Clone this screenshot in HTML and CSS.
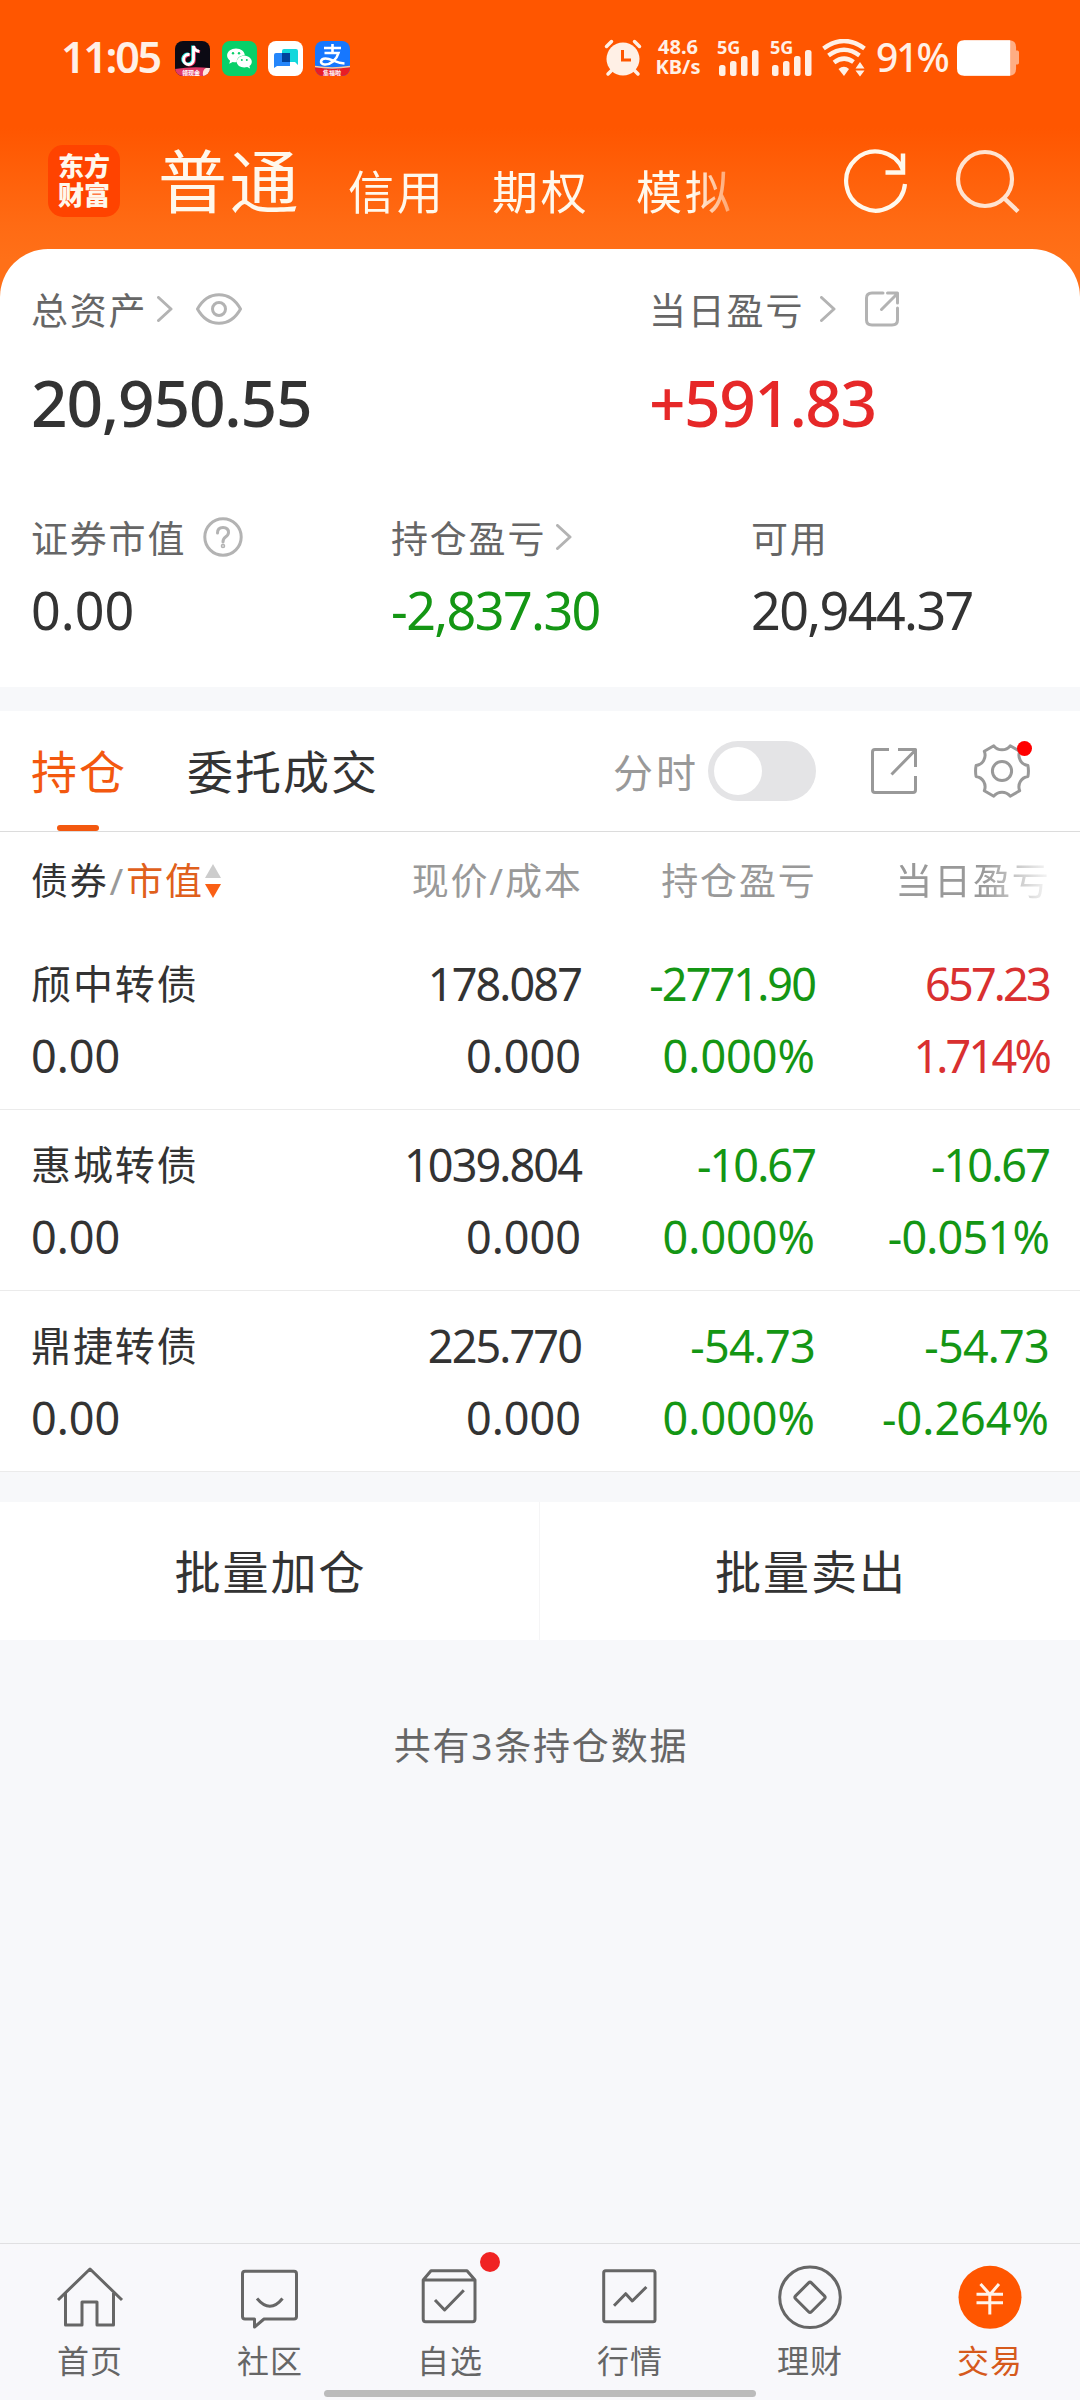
FILE: index.html
```html
<!DOCTYPE html>
<html lang="zh-CN">
<head>
<meta charset="utf-8">
<title>交易</title>
<link rel="stylesheet" href="styles.css">
</head>
<body>
<div class="page">
  <header class="top">
    <div class="status">
      <div class="status-left">
        <span class="clock">11:05</span>
        <svg class="app" viewBox="0 0 35 35"><clipPath id="r"><rect width="35" height="35" rx="8"/></clipPath><g clip-path="url(#r)"><rect width="35" height="35" fill="#0c0a14"/><path d="M18.500 5v13.500a5 5 0 1 1-4-4.900M18.500 5c.4 3 2.500 5 5.800 5.300" transform="translate(-.8 -.5)" fill="none" stroke="#25e4e0" stroke-width="3"/><path d="M18.500 5v13.500a5 5 0 1 1-4-4.900M18.500 5c.4 3 2.500 5 5.800 5.300" transform="translate(.8 .5)" fill="none" stroke="#f5315c" stroke-width="3"/><path d="M18.500 5v13.500a5 5 0 1 1-4-4.900M18.500 5c.4 3 2.500 5 5.800 5.300" fill="none" stroke="#fff" stroke-width="2.800"/><path d="M0 28q17-3 35-1v8H0z" fill="#e23a68"/><path d="M28 35q-1-6 3-8h4v5l-4 3z" fill="#ffe9dc"/></g><text x="7" y="33.500" class="ribbon">领现金</text></svg>
        <svg class="app" viewBox="0 0 35 35"><rect width="35" height="35" rx="8" fill="#08d069"/><path d="M14 7.500c5 0 8.800 3 8.800 7.100-4.800-.1-8.300 2.600-8 6.700-1.600.1-3 0-4.100-.4l-3.500 1.900.9-3c-2-1.400-3-3.200-3-5.200 0-4.100 4-7.100 8.900-7.100z" fill="#fff"/><path d="M22.300 14.800c4.200 0 7.500 2.700 7.500 6 0 1.800-.9 3.200-2.400 4.300l.7 2.500-2.900-1.500c-5.200 1.400-10.400-1-10.400-5.300 0-3.300 3.300-6 7.500-6z" fill="#fff"/><g fill="#08d069"><circle cx="11" cy="12.300" r="1.200"/><circle cx="17" cy="12.300" r="1.200"/><circle cx="19.800" cy="19" r="1"/><circle cx="24.800" cy="19" r="1"/></g></svg>
        <svg class="app" viewBox="0 0 35 35"><rect width="35" height="35" rx="8" fill="#fff"/><path d="M8 12h14v13H9l-3 2V14q0-2 2-2z" fill="#2486fb"/><path d="M16 8h12q2 0 2 2v14l-3-3H14V10q0-2 2-2z" fill="#12d7dc"/><path d="M14 12h8v9h-8z" fill="#00439c"/></svg>
        <svg class="app" viewBox="0 0 35 35"><clipPath id="s"><rect width="35" height="35" rx="8"/></clipPath><g clip-path="url(#s)"><rect width="35" height="35" fill="#1677ff"/><path d="M9 7h17M17.500 3v9M9.500 12h14c-2 7-8 12-14 11.500-5-.5-4.500-6 1-6 6 0 10 4.500 19 5" fill="none" stroke="#fff" stroke-width="2.600"/><path d="M0 26q17 3 35 0v9H0z" fill="#e91d25"/><path d="M0 25.500q17 3 35 0" fill="none" stroke="#ffc79a" stroke-width="1.500"/></g><text x="8" y="33.500" class="ribbon">集福啦</text></svg>
      </div>
      <div class="status-right">
        <svg class="alarm" viewBox="0 0 38 38"><g stroke="#fff0e6" stroke-width="3.500" stroke-linecap="round" fill="none"><path d="M2.500 7.500l5-5M30.500 2.500l5 5M8 31l-4 4M30 31l4 4"/></g><circle cx="19" cy="20" r="16.500" fill="#fff0e6"/><path d="M18.500 11v10h8.500" stroke="#ff5600" stroke-width="3" fill="none"/></svg>
        <div class="speed"><span>48.6</span><span>KB/s</span></div>
        <svg class="cell" viewBox="0 0 44 38"><text x="0" y="14.500" class="gen">5G</text><g fill="#fff0e6"><rect x="2" y="26" width="6.500" height="11" rx="2.500"/><rect x="13" y="22" width="6.500" height="15" rx="2.500"/><rect x="24" y="17" width="6.500" height="20" rx="2.500"/><rect x="35" y="11" width="6.500" height="26" rx="2.500"/></g></svg>
        <svg class="cell second" viewBox="0 0 44 38"><text x="0" y="14.500" class="gen">5G</text><g fill="#fff0e6"><rect x="2" y="26" width="6.500" height="11" rx="2.500"/><rect x="13" y="22" width="6.500" height="15" rx="2.500"/><rect x="24" y="17" width="6.500" height="20" rx="2.500"/><rect x="35" y="11" width="6.500" height="26" rx="2.500"/></g></svg>
        <svg class="wifi" viewBox="0 0 44 38"><g fill="none" stroke="#fff0e6" stroke-width="4.500"><path d="M1.500 9.500Q22-5.500 42.500 9.500"/><path d="M6.500 16.500Q22 5 37.500 16.500"/><path d="M12 23.500Q22 16 31.500 23"/></g><path d="M16.500 30Q22 25.500 27 30L22 37z" fill="#fff0e6"/><path d="M33.500 29.500l4.500-6.500 4.500 6.500zM33.500 31.500h9L38 37.500z" fill="#fff0e6"/></svg>
        <span class="percent">91%</span>
        <svg class="battery" viewBox="0 0 64 38"><path d="M7 1h46q7 0 7 7v3.500h1.500q1.500 0 1.500 2v10q0 2-1.500 2H60V30q0 7-7 7H7z" fill="#ffad83"/><path d="M7 1h47v36H7q-7 0-7-7V8q0-7 7-7z" fill="#fff"/></svg>
      </div>
    </div>
    <div class="titlebar">
      <div class="logo"><span>东方</span><span>财富</span></div>
      <nav class="accounts"><span class="current">普通</span><span>信用</span><span>期权</span><span>模拟</span></nav>
      <svg class="tool" viewBox="0 0 70 70"><path d="M65 37A29.500 29.500 0 1 1 63 23" fill="none" stroke="#fff8ec" stroke-width="4.200"/><path d="M45.500 25.500H63V6.500" fill="none" stroke="#fff8ec" stroke-width="4.500"/></svg>
      <svg class="tool search" viewBox="0 0 70 70"><circle cx="32" cy="32" r="27" fill="none" stroke="#ffe3d0" stroke-width="4.200"/><path d="M51 51l14 13.500" stroke="#ffe3d0" stroke-width="4.500"/></svg>
    </div>
  </header>

  <section class="summary">
    <div class="totals">
      <div class="stat">
        <div class="label">总资产<svg class="chev" viewBox="0 0 16 26"><path d="M1.500 1.500L14 13 1.500 24.500"/></svg><svg class="eye" viewBox="0 0 46 32"><path d="M1.500 16C12-3 34-3 44.500 16 34 35 12 35 1.500 16z"/><circle cx="23" cy="16" r="6.500"/></svg></div>
        <div class="big">20,950.55</div>
      </div>
      <div class="stat">
        <div class="label">当日盈亏<svg class="chev gap" viewBox="0 0 16 26"><path d="M1.500 1.500L14 13 1.500 24.500"/></svg><svg class="share-s" viewBox="0 0 34 36"><path d="M18 2H7Q1.500 2 1.500 7V29Q1.500 34 7 34H27Q32.500 34 32.500 29V17M16.500 18.500L32 3M22.500 2H32.500V12"/></svg></div>
        <div class="big up">+591.83</div>
      </div>
    </div>
    <div class="details">
      <div class="stat">
        <div class="label">证券市值<svg class="help" viewBox="0 0 40 40"><circle cx="20" cy="20" r="18.200"/><path d="M14.500 16Q14.500 10.500 20 10.500T25.500 15.500Q25.500 18 22.500 20 20 21.800 20 25"/><circle cx="20" cy="29" r=".8"/></svg></div>
        <div class="mid">0.00</div>
      </div>
      <div class="stat">
        <div class="label">持仓盈亏<svg class="chev near" viewBox="0 0 16 26"><path d="M1.500 1.500L14 13 1.500 24.500"/></svg></div>
        <div class="mid down tight">-2,837.30</div>
      </div>
      <div class="stat">
        <div class="label">可用</div>
        <div class="mid tight">20,944.37</div>
      </div>
    </div>
  </section>

  <section class="holdings">
    <div class="tabs">
      <span class="tab active">持仓</span>
      <span class="tab">委托成交</span>
      <span class="minute">分时</span>
      <span class="switch"></span>
      <svg class="share" viewBox="0 0 48 48"><path d="M19 2.500H5Q2.500 2.500 2.500 5V43Q2.500 45.500 5 45.500H43Q45.500 45.500 45.500 43V29M21.500 27.500L44.500 4M28 2.500H45.500V20"/></svg>
      <div class="gear"><svg viewBox="0 0 60 60"><path d="M55.900 35.500A10.400 10.400 0 0 0 47.700 49.700L38.200 55.200A10.400 10.400 0 0 0 21.800 55.200L12.300 49.700A10.400 10.400 0 0 0 4.100 35.500Q3 30 4.100 24.500A10.400 10.400 0 0 0 12.300 10.300L21.800 4.800A10.400 10.400 0 0 0 38.200 4.800L47.700 10.300A10.400 10.400 0 0 0 55.900 24.500Q57 30 55.900 35.500z"/><circle cx="30" cy="30" r="9.600"/></svg><i class="dot"></i></div>
    </div>
    <div class="row head">
      <span class="first">债券<em>/</em><b>市值</b><svg class="sort" viewBox="0 0 16 34"><path d="M8 0l8 14H0z" fill="#ccc"/><path d="M0 20h16L8 34z" fill="#fa5f14"/></svg></span>
      <span>现价/成本</span><span>持仓盈亏</span><span class="fade">当日盈亏</span>
    </div>
    <div class="row item">
      <span class="name">颀中转债</span><span class="tight">178.087</span><span class="down tight">-2771.90</span><span class="up tighter">657.23</span>
      <span class="qty">0.00</span><span>0.000</span><span class="down">0.000%</span><span class="up tighter">1.714%</span>
    </div>
    <div class="row item">
      <span class="name">惠城转债</span><span class="tight">1039.804</span><span class="down tight">-10.67</span><span class="down tight">-10.67</span>
      <span class="qty">0.00</span><span>0.000</span><span class="down">0.000%</span><span class="down snug">-0.051%</span>
    </div>
    <div class="row item">
      <span class="name">鼎捷转债</span><span class="tight">225.770</span><span class="down snug">-54.73</span><span class="down snug">-54.73</span>
      <span class="qty">0.00</span><span>0.000</span><span class="down">0.000%</span><span class="down">-0.264%</span>
    </div>
  </section>

  <div class="batch"><span>批量加仓</span><span>批量卖出</span></div>
  <p class="count">共有3条持仓数据</p>

  <nav class="bottom">
    <div class="entry"><svg viewBox="0 0 72 72"><path d="M4 39L36 8 68 39M11.500 32V64H28V41H43V64H59.500V32"/></svg><span>首页</span></div>
    <div class="entry"><svg viewBox="0 0 72 72"><path d="M11 10.300H60Q62.500 10.300 62.500 13V55.500Q62.500 58 60 58H30L20.500 66V58H11Q8.500 58 8.500 55.500V13Q8.500 10.300 11 10.300zM23 37.500Q36 53 48.500 37.500"/></svg><span>社区</span></div>
    <div class="entry"><svg viewBox="0 0 72 72"><path d="M9.200 19L17 9.700H53L61 19V58Q61 60.700 58.500 60.700H11.700Q9.200 60.700 9.200 58zM9.200 19H61M21 39L30.600 49 49.800 29.300"/></svg><i class="dot"></i><span>自选</span></div>
    <div class="entry"><svg viewBox="0 0 72 72"><rect x="9.700" y="9.700" width="51.300" height="51" rx="2"/><path d="M20 44.700L31.700 32.700 38.300 40 52.400 26"/></svg><span>行情</span></div>
    <div class="entry"><svg viewBox="0 0 72 72"><circle cx="36" cy="36.300" r="30.300"/><rect x="24.800" y="25.100" width="22.400" height="22.400" rx="2" transform="rotate(45 36 36.300)"/></svg><span>理财</span></div>
    <div class="entry selected"><svg viewBox="0 0 72 72"><circle class="disc" cx="36" cy="36.300" r="31.500"/><path class="yen" d="M26.500 23L36 33.500 45 23M22.500 33.200H49M22.500 41.800H49M35.800 33V53.500"/></svg><span>交易</span></div>
    <i class="handle"></i>
  </nav>
</div>
</body>
</html>
```
FILE: styles.css
```css
* { box-sizing: border-box; }
body {
  margin: 0;
  font-family: "Noto Sans", "Noto Sans CJK SC", sans-serif;
  color: #333;
  background: #f7f8fa;
}
i, em { font-style: normal; }
b { font-weight: 400; }
svg { display: block; flex: none; }

.page {
  width: 1080px;
  height: 2400px;
  display: flex;
  flex-direction: column;
  overflow: hidden;
}

/* Header */
.top {
  height: 297px;
  flex: none;
  background: linear-gradient(#ff5600 128px, #ff6b14 226px, #ff7018 260px);
}
.status {
  height: 116px;
  display: flex;
  justify-content: space-between;
  padding: 0 60px 0 61px;
  color: #fff0e6;
}
.status-left, .status-right { display: flex; align-items: center; }
.clock {
  width: 114px;
  font-size: 43px;
  line-height: 58px;
  padding-bottom: 2px;
  font-weight: 600;
  letter-spacing: -2.300px;
}
.app { width: 35px; height: 35px; margin-right: 11.700px; }
.ribbon { font-size: 6px; font-weight: 700; fill: #fff; }
.alarm { width: 38px; height: 38px; margin-right: 11px; }
.speed {
  width: 50px;
  display: flex;
  flex-direction: column;
  align-items: center;
  font-size: 20px;
  line-height: 20px;
  padding-bottom: 3px;
  font-weight: 700;
  margin-right: 14px;
}
.cell { width: 44px; height: 38px; margin-right: 9px; overflow: visible; }
.second { margin-right: 8px; }
.gen { font-size: 18px; font-weight: 700; fill: #fff0e6; }
.wifi { width: 44px; height: 38px; }
.percent {
  width: 91px;
  padding-left: 10px;
  font-size: 39px;
  line-height: 58px;
  padding-bottom: 2px;
  font-weight: 500;
  letter-spacing: -2px;
}
.battery { width: 63px; height: 38px; }

.titlebar {
  height: 131px;
  margin-top: 2px;
  display: flex;
  align-items: flex-start;
  padding: 0 0 0 48px;
}
.logo {
  width: 72px;
  height: 72px;
  margin-top: 27px;
  border-radius: 15px;
  background: #ff4300;
  display: flex;
  flex-direction: column;
  align-items: center;
  justify-content: center;
  color: #fff8ec;
  font-size: 26px;
  line-height: 29px;
  font-weight: 900;
}
.accounts {
  width: 644px;
  margin: 13px 38px 0 38px;
  display: flex;
  align-items: flex-end;
  color: #fff8ec;
  font-size: 46px;
  line-height: 80px;
  letter-spacing: 2.700px;
  white-space: nowrap;
  -webkit-mask-image: linear-gradient(90deg, #000 535px, transparent 600px);
  mask-image: linear-gradient(90deg, #000 535px, transparent 600px);
}
.accounts span { margin-right: 46.600px; }
.accounts .current {
  font-size: 69px;
  line-height: 100px;
  letter-spacing: 2.500px;
  margin-right: 47px;
}
.tool { width: 70px; height: 70px; margin-top: 29px; }
.search { margin-left: 43px; }

/* Asset summary */
.summary {
  height: 438px;
  flex: none;
  margin-top: -48px;
  padding: 35px 31px 0;
  background: #fff;
  border-radius: 48px 48px 0 0;
}
.totals { display: flex; height: 228px; }
.totals .stat { width: 618px; flex: none; }
.details { display: grid; grid-template-columns: 360px 360px 1fr; }
.label {
  height: 50px;
  display: flex;
  align-items: center;
  font-size: 37px;
  letter-spacing: 1.800px;
  color: #666;
}
.label svg, .share, .gear svg {
  fill: none;
  stroke: #b3b3b3;
  stroke-width: 3;
  stroke-linecap: round;
  stroke-linejoin: round;
}
.chev { width: 16px; height: 26px; margin-left: 10px; }
.chev.gap { margin-left: 16px; }
.chev.near { margin-left: 10px; }
.eye { width: 46px; height: 32px; margin-left: 23px; }
.share-s { width: 34px; height: 36px; margin-left: 29px; }
.help { width: 40px; height: 40px; margin-left: 17px; }
.big {
  margin-top: 34px;
  font-size: 64px;
  line-height: 70px;
  font-weight: 500;
  letter-spacing: -1.200px;
}
.mid { margin-top: 18px; font-size: 52px; line-height: 60px; }
.up { color: #e62828; }
.down { color: #149614; }
.big.up { letter-spacing: -1.500px; }
.snug { letter-spacing: -.8px; }
.tight { letter-spacing: -1.600px; }
.tighter { letter-spacing: -2.800px; }

/* Holdings */
.holdings { flex: none; margin-top: 24px; background: #fff; }
.tabs {
  height: 121px;
  display: flex;
  align-items: center;
  padding-left: 31px;
  border-bottom: 1px solid #dcdcdc;
}
.tab {
  position: relative;
  font-size: 46px;
  line-height: 120px;
  letter-spacing: 2px;
  margin-right: 60px;
}
.tab.active { color: #f3580f; }
.tab.active::after {
  content: "";
  position: absolute;
  left: 26px;
  bottom: 0;
  width: 42px;
  height: 6px;
  border-radius: 3px;
  background: #f3580f;
}
.minute {
  margin-left: auto;
  font-size: 40px;
  letter-spacing: 3px;
  color: #999;
}
.switch {
  width: 108px;
  height: 60px;
  margin-left: 9px;
  padding: 6px;
  border-radius: 30px;
  background: #e4e4e6;
}
.switch::before {
  content: "";
  display: block;
  width: 48px;
  height: 48px;
  border-radius: 50%;
  background: #fff;
}
.share { width: 48px; height: 48px; margin-left: 54px; }
.gear { position: relative; margin: 0 48px 0 54px; }
.share, .gear svg { stroke: #999; stroke-linecap: butt; }
.gear svg { width: 60px; height: 60px; }
.gear .dot {
  position: absolute;
  left: 45px;
  top: -.5px;
  width: 15px;
  height: 15px;
  border-radius: 50%;
  background: #f00;
}
.row {
  display: grid;
  grid-template-columns: 251px 299px 234px 234px;
  padding-left: 31px;
  text-align: right;
  white-space: nowrap;
}
.head {
  height: 97px;
  line-height: 98px;
  font-size: 37px;
  letter-spacing: 1.800px;
  color: #999;
}
.head span:not(.first) { margin-right: -1.500px; }
.head .first {
  display: flex;
  align-items: center;
  color: #333;
}
.head em { color: #999; margin: 0 1px; }
.head b { color: #e0601c; }
.sort { width: 16px; height: 34px; margin-left: 1px; }
.fade {
  -webkit-mask-image: linear-gradient(90deg, #000 168px, transparent 240px);
  mask-image: linear-gradient(90deg, #000 168px, transparent 240px);
}
.item {
  height: 181px;
  padding-top: 18px;
  grid-template-rows: 72px 73px;
  line-height: 73px;
  font-size: 45px;
  border-bottom: 1px solid #ebebeb;
}
.item .tight { letter-spacing: -1.900px; }
.item .name { font-size: 40px; letter-spacing: 1.900px; }
.item .name, .item .qty { text-align: left; }
.item .up { color: #d93030; }

/* Batch actions */
.batch {
  flex: none;
  height: 138px;
  margin-top: 30px;
  display: grid;
  grid-template-columns: 540px 540px;
  background: #fff;
  font-size: 46px;
  line-height: 138px;
  letter-spacing: 2px;
  text-align: center;
}
.batch span { padding-left: 2px; }
.batch span:first-child { border-right: 1px solid #f5f5f6; }
.count {
  flex: 1;
  margin: 0;
  padding: 76px 0 0 2px;
  font-size: 37px;
  line-height: 60px;
  letter-spacing: 1.800px;
  text-align: center;
  color: #666;
}

/* Bottom navigation */
.bottom {
  position: relative;
  height: 157px;
  flex: none;
  display: grid;
  grid-template-columns: repeat(6, 180px);
  border-top: 1px solid #e0e0e2;
  background: #f8f8fb;
}
.entry {
  position: relative;
  display: flex;
  flex-direction: column;
  align-items: center;
  padding-top: 17px;
  font-size: 32px;
  line-height: 56px;
  letter-spacing: 1px;
  color: #666;
}
.entry svg {
  width: 72px;
  height: 72px;
  fill: none;
  stroke: #666;
  stroke-width: 3;
  stroke-linejoin: round;
}
.entry .dot {
  position: absolute;
  left: 120px;
  top: 8px;
  width: 20px;
  height: 20px;
  border-radius: 50%;
  background: #f02323;
}
.entry .disc { fill: #ff5600; stroke: none; }
.entry .yen { stroke: #fff4ea; }
.selected { color: #d65a1c; }
.handle {
  position: absolute;
  left: 324px;
  bottom: 3px;
  width: 432px;
  height: 7px;
  border-radius: 4px;
  background: #bbb;
}
```
